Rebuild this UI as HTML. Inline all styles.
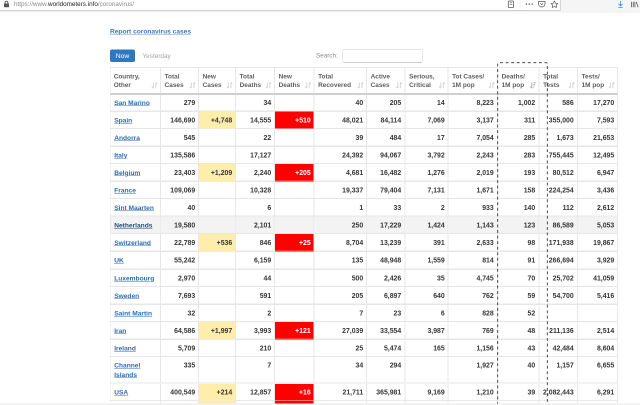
<!DOCTYPE html>
<html><head><meta charset="utf-8"><title>Coronavirus</title>
<style>
html,body{margin:0;padding:0;background:#fff;}
body{width:640px;height:405px;overflow:hidden;position:relative;font-family:"Liberation Sans",Arial,sans-serif;}
#s{position:absolute;left:0;top:0;width:1280px;height:810px;transform:scale(0.5);will-change:transform;transform-origin:0 0;}
.abs{position:absolute;}
.bar{left:0;top:0;width:1280px;height:25px;background:#f5f5f6;}
.barsh{left:0;top:25px;width:1280px;height:1px;background:#fafafa}
.urlf{left:0;top:0;width:1120px;height:20px;background:#fff;border-right:2px solid #d6d6d8;border-bottom:2px solid #d0d0d2;}
.url{left:28px;top:-0.4px;font-size:12.64px;line-height:16px;color:#8a8a8a;white-space:nowrap;letter-spacing:0}
.url b{font-weight:normal;color:#1a1a1a}
.report{left:220px;top:54px;font-size:13.2px;line-height:18px;font-weight:bold;color:#3a7abf;text-decoration:underline;text-decoration-thickness:1px;text-decoration-color:rgba(58,122,191,.75);white-space:nowrap}
.now{left:220px;top:99px;width:50px;height:25px;background:#2f78bd;border-radius:4px;color:#fff;font-size:13.6px;line-height:25px;text-align:center}
.yest{left:285px;top:99px;font-size:12.8px;line-height:25px;color:#a3a3a3}
.search{left:632px;top:99px;font-size:12.6px;line-height:25px;color:#8a8a8a}
.inp{left:685px;top:98px;width:161px;height:27px;border:1.2px solid #ccc;border-radius:4px;box-sizing:border-box;background:#fff}
.cell{position:absolute;box-sizing:border-box;border-right:2px solid #e7e7e7;border-bottom:2px solid #e7e7e7;font-size:13.8px;font-weight:bold;color:#363636;text-align:right;padding:0 5.6px 0 0;white-space:nowrap}
.cell.c0{border-left:2px solid #e7e7e7;text-align:left;padding:0 0 0 7.4px;color:#2f6cb0;text-decoration:underline;font-size:13.24px}
.hd{position:absolute;box-sizing:border-box;border-right:2px solid #e7e7e7;border-top:2px solid #e7e7e7;border-bottom:4px solid #cfcfcf;font-size:12.9px;line-height:17.8px;color:#5e5e5e;text-align:left;padding:7.5px 0 0 8.2px;white-space:nowrap;font-weight:bold;letter-spacing:0}
.hd.c0{border-left:2px solid #e7e7e7;padding-left:6.4px}
.y{background:#ffeeaa;border-bottom-color:#f5edcb!important}
.r{background:#ff0000;color:#fff;border-bottom-color:#f57575!important}
.g{background:#f3f3f3}
.cell.c0.hov{color:#23527c}
.sort{position:absolute;right:5.4px;bottom:9.5px;width:12px;height:13px}
</style></head><body><div id="s">
<div class="abs bar"></div>
<div class="abs urlf"></div><div class="abs barsh"></div>
<svg class="abs" style="left:6.8px;top:0.8px;width:12px;height:14px" viewBox="0 0 12 14"><rect x="1" y="6" width="10" height="7.5" rx="1" fill="#555"/><path d="M3.2 6V4.2a2.8 2.8 0 0 1 5.6 0V6" fill="none" stroke="#555" stroke-width="1.8"/></svg>
<div class="abs url">https://www.<b>worldometers.info</b>/coronavirus/</div>

<svg class="abs" style="left:1010px;top:0px;width:270px;height:20px" viewBox="0 0 135 10">
<rect x="3.300" y="1" width="5.300" height="6.500" rx="0.900" fill="none" stroke="#5a5a5a" stroke-width="0.750"/>
<path d="M4.700 2.800h2.500M4.700 4.300h2.500" stroke="#5a5a5a" stroke-width="0.550"/>
<path d="M15 1v7.500" stroke="#e8e8e8" stroke-width="0.600"/>
<circle cx="21.400" cy="4.100" r="0.720" fill="#555"/><circle cx="24.300" cy="4.100" r="0.720" fill="#555"/><circle cx="27.200" cy="4.100" r="0.720" fill="#555"/>
<path d="M33.500 1.400h6.500v2.400a3.250 3.250 0 0 1-6.500 0z" fill="none" stroke="#5a5a5a" stroke-width="0.750" stroke-linejoin="round"/>
<path d="M35.300 3.300l1.450 1.350l1.450-1.350" fill="none" stroke="#5a5a5a" stroke-width="0.650"/>
<path d="M49.400 1l1.050 2.200l2.400.300l-1.750 1.650l.45 2.400l-2.150-1.150l-2.150 1.150l.45-2.400l-1.750-1.650l2.400-.300z" fill="none" stroke="#5a5a5a" stroke-width="0.700" stroke-linejoin="round"/>
<path d="M115.500 1v4.800M113.500 3.900l2 2l2-2M113.200 7.500h4.600" fill="none" stroke="#3b8ff5" stroke-width="0.850"/>
<path d="M126.600 1.700v5.600M128.250 1.700v5.600M129.900 1.700v5.600M131.300 2l1.800 5.300" fill="none" stroke="#555" stroke-width="0.800"/>
</svg>

<div class="abs report">Report coronavirus cases</div>
<div class="abs now">Now</div><div class="abs yest">Yesterday</div><div class="abs search">Search:</div><div class="abs inp"></div>
<div class="hd c0" style="left:219px;top:134px;width:103px;height:56px">Country,<br>Other<svg class="sort" viewBox="0 0 6 6" preserveAspectRatio="none"><path d="M1.800 0.300V5.600M0.200 4.200L1.800 5.700M4.300 5.700V0.400M4.300 0.300L5.800 1.800" fill="none" stroke="#d2d2d2" stroke-width="0.900"/></svg></div>
<div class="hd" style="left:321px;top:134px;width:77px;height:56px">Total<br>Cases<svg class="sort" viewBox="0 0 6 6" preserveAspectRatio="none"><path d="M1.800 0.300V5.600M0.200 4.200L1.800 5.700M4.300 5.700V0.400M4.300 0.300L5.800 1.800" fill="none" stroke="#d2d2d2" stroke-width="0.900"/></svg></div>
<div class="hd" style="left:397px;top:134px;width:75px;height:56px">New<br>Cases<svg class="sort" viewBox="0 0 6 6" preserveAspectRatio="none"><path d="M1.800 0.300V5.600M0.200 4.200L1.800 5.700M4.300 5.700V0.400M4.300 0.300L5.800 1.800" fill="none" stroke="#d2d2d2" stroke-width="0.900"/></svg></div>
<div class="hd" style="left:471px;top:134px;width:79px;height:56px">Total<br>Deaths<svg class="sort" viewBox="0 0 6 6" preserveAspectRatio="none"><path d="M1.800 0.300V5.600M0.200 4.200L1.800 5.700M4.300 5.700V0.400M4.300 0.300L5.800 1.800" fill="none" stroke="#d2d2d2" stroke-width="0.900"/></svg></div>
<div class="hd" style="left:549px;top:134px;width:80px;height:56px">New<br>Deaths<svg class="sort" viewBox="0 0 6 6" preserveAspectRatio="none"><path d="M1.800 0.300V5.600M0.200 4.200L1.800 5.700M4.300 5.700V0.400M4.300 0.300L5.800 1.800" fill="none" stroke="#d2d2d2" stroke-width="0.900"/></svg></div>
<div class="hd" style="left:628px;top:134px;width:106px;height:56px">Total<br>Recovered<svg class="sort" viewBox="0 0 6 6" preserveAspectRatio="none"><path d="M1.800 0.300V5.600M0.200 4.200L1.800 5.700M4.300 5.700V0.400M4.300 0.300L5.800 1.800" fill="none" stroke="#d2d2d2" stroke-width="0.900"/></svg></div>
<div class="hd" style="left:733px;top:134px;width:78px;height:56px">Active<br>Cases<svg class="sort" viewBox="0 0 6 6" preserveAspectRatio="none"><path d="M1.800 0.300V5.600M0.200 4.200L1.800 5.700M4.300 5.700V0.400M4.300 0.300L5.800 1.800" fill="none" stroke="#d2d2d2" stroke-width="0.900"/></svg></div>
<div class="hd" style="left:810px;top:134px;width:87px;height:56px">Serious,<br>Critical<svg class="sort" viewBox="0 0 6 6" preserveAspectRatio="none"><path d="M1.800 0.300V5.600M0.200 4.200L1.800 5.700M4.300 5.700V0.400M4.300 0.300L5.800 1.800" fill="none" stroke="#d2d2d2" stroke-width="0.900"/></svg></div>
<div class="hd" style="left:896px;top:134px;width:100px;height:56px">Tot Cases/<br>1M pop<svg class="sort" viewBox="0 0 6 6" preserveAspectRatio="none"><path d="M1.800 0.300V5.600M0.200 4.200L1.800 5.700M4.300 5.700V0.400M4.300 0.300L5.800 1.800" fill="none" stroke="#d2d2d2" stroke-width="0.900"/></svg></div>
<div class="hd" style="left:995px;top:134px;width:84px;height:56px">Deaths/<br>1M pop<svg class="sort" viewBox="0 0 6 6" preserveAspectRatio="none"><path d="M1.800 0.300V5.600M0.200 4.200L1.800 5.700" fill="none" stroke="#a8a8a8" stroke-width="0.900"/><path d="M3.300 0.700H5.900M3.300 2.200H5.200M3.300 3.700H4.600M3.300 5.200H4" fill="none" stroke="#a8a8a8" stroke-width="0.800"/></svg></div>
<div class="hd" style="left:1078px;top:134px;width:78px;height:56px">Total<br>Tests<svg class="sort" viewBox="0 0 6 6" preserveAspectRatio="none"><path d="M1.800 0.300V5.600M0.200 4.200L1.800 5.700M4.300 5.700V0.400M4.300 0.300L5.800 1.800" fill="none" stroke="#d2d2d2" stroke-width="0.900"/></svg></div>
<div class="hd" style="left:1155px;top:134px;width:81px;height:56px">Tests/<br>1M pop<svg class="sort" viewBox="0 0 6 6" preserveAspectRatio="none"><path d="M1.800 0.300V5.600M0.200 4.200L1.800 5.700M4.300 5.700V0.400M4.300 0.300L5.800 1.800" fill="none" stroke="#d2d2d2" stroke-width="0.900"/></svg></div>
<div class="cell c0" style="left:219px;top:189.6px;width:103px;height:33.2px;line-height:31px;">San Marino</div>
<div class="cell" style="left:321px;top:189.6px;width:77px;height:33.2px;line-height:31px;">279</div>
<div class="cell" style="left:397px;top:189.6px;width:75px;height:33.2px;line-height:31px;"></div>
<div class="cell" style="left:471px;top:189.6px;width:79px;height:33.2px;line-height:31px;">34</div>
<div class="cell" style="left:549px;top:189.6px;width:80px;height:33.2px;line-height:31px;"></div>
<div class="cell" style="left:628px;top:189.6px;width:106px;height:33.2px;line-height:31px;">40</div>
<div class="cell" style="left:733px;top:189.6px;width:78px;height:33.2px;line-height:31px;padding-right:6.6px;">205</div>
<div class="cell" style="left:810px;top:189.6px;width:87px;height:33.2px;line-height:31px;">14</div>
<div class="cell" style="left:896px;top:189.6px;width:100px;height:33.2px;line-height:31px;padding-right:6.6px;">8,223</div>
<div class="cell" style="left:995px;top:189.6px;width:84px;height:33.2px;line-height:31px;padding-right:6.6px;">1,002</div>
<div class="cell" style="left:1078px;top:189.6px;width:78px;height:33.2px;line-height:31px;padding-right:6.6px;">586</div>
<div class="cell" style="left:1155px;top:189.6px;width:81px;height:33.2px;line-height:31px;">17,270</div>
<div class="cell c0" style="left:219px;top:222.8px;width:103px;height:35px;line-height:35px;">Spain</div>
<div class="cell" style="left:321px;top:222.8px;width:77px;height:35px;line-height:35px;">146,690</div>
<div class="cell y" style="left:398px;top:222.8px;width:74px;height:35px;line-height:35px;">+4,748</div>
<div class="cell" style="left:471px;top:222.8px;width:79px;height:35px;line-height:35px;">14,555</div>
<div class="cell r" style="left:550px;top:222.8px;width:79px;height:35px;line-height:35px;">+510</div>
<div class="cell" style="left:628px;top:222.8px;width:106px;height:35px;line-height:35px;">48,021</div>
<div class="cell" style="left:733px;top:222.8px;width:78px;height:35px;line-height:35px;padding-right:6.6px;">84,114</div>
<div class="cell" style="left:810px;top:222.8px;width:87px;height:35px;line-height:35px;">7,069</div>
<div class="cell" style="left:896px;top:222.8px;width:100px;height:35px;line-height:35px;padding-right:6.6px;">3,137</div>
<div class="cell" style="left:995px;top:222.8px;width:84px;height:35px;line-height:35px;padding-right:6.6px;">311</div>
<div class="cell" style="left:1078px;top:222.8px;width:78px;height:35px;line-height:35px;padding-right:6.6px;">355,000</div>
<div class="cell" style="left:1155px;top:222.8px;width:81px;height:35px;line-height:35px;">7,593</div>
<div class="cell c0" style="left:219px;top:257.8px;width:103px;height:35px;line-height:35px;">Andorra</div>
<div class="cell" style="left:321px;top:257.8px;width:77px;height:35px;line-height:35px;">545</div>
<div class="cell" style="left:397px;top:257.8px;width:75px;height:35px;line-height:35px;"></div>
<div class="cell" style="left:471px;top:257.8px;width:79px;height:35px;line-height:35px;">22</div>
<div class="cell" style="left:549px;top:257.8px;width:80px;height:35px;line-height:35px;"></div>
<div class="cell" style="left:628px;top:257.8px;width:106px;height:35px;line-height:35px;">39</div>
<div class="cell" style="left:733px;top:257.8px;width:78px;height:35px;line-height:35px;padding-right:6.6px;">484</div>
<div class="cell" style="left:810px;top:257.8px;width:87px;height:35px;line-height:35px;">17</div>
<div class="cell" style="left:896px;top:257.8px;width:100px;height:35px;line-height:35px;padding-right:6.6px;">7,054</div>
<div class="cell" style="left:995px;top:257.8px;width:84px;height:35px;line-height:35px;padding-right:6.6px;">285</div>
<div class="cell" style="left:1078px;top:257.8px;width:78px;height:35px;line-height:35px;padding-right:6.6px;">1,673</div>
<div class="cell" style="left:1155px;top:257.8px;width:81px;height:35px;line-height:35px;">21,653</div>
<div class="cell c0" style="left:219px;top:292.8px;width:103px;height:35px;line-height:35px;">Italy</div>
<div class="cell" style="left:321px;top:292.8px;width:77px;height:35px;line-height:35px;">135,586</div>
<div class="cell" style="left:397px;top:292.8px;width:75px;height:35px;line-height:35px;"></div>
<div class="cell" style="left:471px;top:292.8px;width:79px;height:35px;line-height:35px;">17,127</div>
<div class="cell" style="left:549px;top:292.8px;width:80px;height:35px;line-height:35px;"></div>
<div class="cell" style="left:628px;top:292.8px;width:106px;height:35px;line-height:35px;">24,392</div>
<div class="cell" style="left:733px;top:292.8px;width:78px;height:35px;line-height:35px;padding-right:6.6px;">94,067</div>
<div class="cell" style="left:810px;top:292.8px;width:87px;height:35px;line-height:35px;">3,792</div>
<div class="cell" style="left:896px;top:292.8px;width:100px;height:35px;line-height:35px;padding-right:6.6px;">2,243</div>
<div class="cell" style="left:995px;top:292.8px;width:84px;height:35px;line-height:35px;padding-right:6.6px;">283</div>
<div class="cell" style="left:1078px;top:292.8px;width:78px;height:35px;line-height:35px;padding-right:6.6px;">755,445</div>
<div class="cell" style="left:1155px;top:292.8px;width:81px;height:35px;line-height:35px;">12,495</div>
<div class="cell c0" style="left:219px;top:327.8px;width:103px;height:35px;line-height:35px;">Belgium</div>
<div class="cell" style="left:321px;top:327.8px;width:77px;height:35px;line-height:35px;">23,403</div>
<div class="cell y" style="left:398px;top:327.8px;width:74px;height:35px;line-height:35px;">+1,209</div>
<div class="cell" style="left:471px;top:327.8px;width:79px;height:35px;line-height:35px;">2,240</div>
<div class="cell r" style="left:550px;top:327.8px;width:79px;height:35px;line-height:35px;">+205</div>
<div class="cell" style="left:628px;top:327.8px;width:106px;height:35px;line-height:35px;">4,681</div>
<div class="cell" style="left:733px;top:327.8px;width:78px;height:35px;line-height:35px;padding-right:6.6px;">16,482</div>
<div class="cell" style="left:810px;top:327.8px;width:87px;height:35px;line-height:35px;">1,276</div>
<div class="cell" style="left:896px;top:327.8px;width:100px;height:35px;line-height:35px;padding-right:6.6px;">2,019</div>
<div class="cell" style="left:995px;top:327.8px;width:84px;height:35px;line-height:35px;padding-right:6.6px;">193</div>
<div class="cell" style="left:1078px;top:327.8px;width:78px;height:35px;line-height:35px;padding-right:6.6px;">80,512</div>
<div class="cell" style="left:1155px;top:327.8px;width:81px;height:35px;line-height:35px;">6,947</div>
<div class="cell c0" style="left:219px;top:362.8px;width:103px;height:35px;line-height:35px;">France</div>
<div class="cell" style="left:321px;top:362.8px;width:77px;height:35px;line-height:35px;">109,069</div>
<div class="cell" style="left:397px;top:362.8px;width:75px;height:35px;line-height:35px;"></div>
<div class="cell" style="left:471px;top:362.8px;width:79px;height:35px;line-height:35px;">10,328</div>
<div class="cell" style="left:549px;top:362.8px;width:80px;height:35px;line-height:35px;"></div>
<div class="cell" style="left:628px;top:362.8px;width:106px;height:35px;line-height:35px;">19,337</div>
<div class="cell" style="left:733px;top:362.8px;width:78px;height:35px;line-height:35px;padding-right:6.6px;">79,404</div>
<div class="cell" style="left:810px;top:362.8px;width:87px;height:35px;line-height:35px;">7,131</div>
<div class="cell" style="left:896px;top:362.8px;width:100px;height:35px;line-height:35px;padding-right:6.6px;">1,671</div>
<div class="cell" style="left:995px;top:362.8px;width:84px;height:35px;line-height:35px;padding-right:6.6px;">158</div>
<div class="cell" style="left:1078px;top:362.8px;width:78px;height:35px;line-height:35px;padding-right:6.6px;">224,254</div>
<div class="cell" style="left:1155px;top:362.8px;width:81px;height:35px;line-height:35px;">3,436</div>
<div class="cell c0" style="left:219px;top:397.8px;width:103px;height:35px;line-height:35px;">Sint Maarten</div>
<div class="cell" style="left:321px;top:397.8px;width:77px;height:35px;line-height:35px;">40</div>
<div class="cell" style="left:397px;top:397.8px;width:75px;height:35px;line-height:35px;"></div>
<div class="cell" style="left:471px;top:397.8px;width:79px;height:35px;line-height:35px;">6</div>
<div class="cell" style="left:549px;top:397.8px;width:80px;height:35px;line-height:35px;"></div>
<div class="cell" style="left:628px;top:397.8px;width:106px;height:35px;line-height:35px;">1</div>
<div class="cell" style="left:733px;top:397.8px;width:78px;height:35px;line-height:35px;padding-right:6.6px;">33</div>
<div class="cell" style="left:810px;top:397.8px;width:87px;height:35px;line-height:35px;">2</div>
<div class="cell" style="left:896px;top:397.8px;width:100px;height:35px;line-height:35px;padding-right:6.6px;">933</div>
<div class="cell" style="left:995px;top:397.8px;width:84px;height:35px;line-height:35px;padding-right:6.6px;">140</div>
<div class="cell" style="left:1078px;top:397.8px;width:78px;height:35px;line-height:35px;padding-right:6.6px;">112</div>
<div class="cell" style="left:1155px;top:397.8px;width:81px;height:35px;line-height:35px;">2,612</div>
<div class="cell c0 g hov" style="left:219px;top:432.8px;width:103px;height:35px;line-height:35px;">Netherlands</div>
<div class="cell g" style="left:321px;top:432.8px;width:77px;height:35px;line-height:35px;">19,580</div>
<div class="cell g" style="left:397px;top:432.8px;width:75px;height:35px;line-height:35px;"></div>
<div class="cell g" style="left:471px;top:432.8px;width:79px;height:35px;line-height:35px;">2,101</div>
<div class="cell g" style="left:549px;top:432.8px;width:80px;height:35px;line-height:35px;"></div>
<div class="cell g" style="left:628px;top:432.8px;width:106px;height:35px;line-height:35px;">250</div>
<div class="cell g" style="left:733px;top:432.8px;width:78px;height:35px;line-height:35px;padding-right:6.6px;">17,229</div>
<div class="cell g" style="left:810px;top:432.8px;width:87px;height:35px;line-height:35px;">1,424</div>
<div class="cell g" style="left:896px;top:432.8px;width:100px;height:35px;line-height:35px;padding-right:6.6px;">1,143</div>
<div class="cell g" style="left:995px;top:432.8px;width:84px;height:35px;line-height:35px;padding-right:6.6px;">123</div>
<div class="cell g" style="left:1078px;top:432.8px;width:78px;height:35px;line-height:35px;padding-right:6.6px;">86,589</div>
<div class="cell g" style="left:1155px;top:432.8px;width:81px;height:35px;line-height:35px;">5,053</div>
<div class="cell c0" style="left:219px;top:467.8px;width:103px;height:35px;line-height:35px;">Switzerland</div>
<div class="cell" style="left:321px;top:467.8px;width:77px;height:35px;line-height:35px;">22,789</div>
<div class="cell y" style="left:398px;top:467.8px;width:74px;height:35px;line-height:35px;">+536</div>
<div class="cell" style="left:471px;top:467.8px;width:79px;height:35px;line-height:35px;">846</div>
<div class="cell r" style="left:550px;top:467.8px;width:79px;height:35px;line-height:35px;">+25</div>
<div class="cell" style="left:628px;top:467.8px;width:106px;height:35px;line-height:35px;">8,704</div>
<div class="cell" style="left:733px;top:467.8px;width:78px;height:35px;line-height:35px;padding-right:6.6px;">13,239</div>
<div class="cell" style="left:810px;top:467.8px;width:87px;height:35px;line-height:35px;">391</div>
<div class="cell" style="left:896px;top:467.8px;width:100px;height:35px;line-height:35px;padding-right:6.6px;">2,633</div>
<div class="cell" style="left:995px;top:467.8px;width:84px;height:35px;line-height:35px;padding-right:6.6px;">98</div>
<div class="cell" style="left:1078px;top:467.8px;width:78px;height:35px;line-height:35px;padding-right:6.6px;">171,938</div>
<div class="cell" style="left:1155px;top:467.8px;width:81px;height:35px;line-height:35px;">19,867</div>
<div class="cell c0" style="left:219px;top:502.8px;width:103px;height:36px;line-height:35px;">UK</div>
<div class="cell" style="left:321px;top:502.8px;width:77px;height:36px;line-height:35px;">55,242</div>
<div class="cell" style="left:397px;top:502.8px;width:75px;height:36px;line-height:35px;"></div>
<div class="cell" style="left:471px;top:502.8px;width:79px;height:36px;line-height:35px;">6,159</div>
<div class="cell" style="left:549px;top:502.8px;width:80px;height:36px;line-height:35px;"></div>
<div class="cell" style="left:628px;top:502.8px;width:106px;height:36px;line-height:35px;">135</div>
<div class="cell" style="left:733px;top:502.8px;width:78px;height:36px;line-height:35px;padding-right:6.6px;">48,948</div>
<div class="cell" style="left:810px;top:502.8px;width:87px;height:36px;line-height:35px;">1,559</div>
<div class="cell" style="left:896px;top:502.8px;width:100px;height:36px;line-height:35px;padding-right:6.6px;">814</div>
<div class="cell" style="left:995px;top:502.8px;width:84px;height:36px;line-height:35px;padding-right:6.6px;">91</div>
<div class="cell" style="left:1078px;top:502.8px;width:78px;height:36px;line-height:35px;padding-right:6.6px;">266,694</div>
<div class="cell" style="left:1155px;top:502.8px;width:81px;height:36px;line-height:35px;">3,929</div>
<div class="cell c0" style="left:219px;top:538.8px;width:103px;height:35px;line-height:35px;">Luxembourg</div>
<div class="cell" style="left:321px;top:538.8px;width:77px;height:35px;line-height:35px;">2,970</div>
<div class="cell" style="left:397px;top:538.8px;width:75px;height:35px;line-height:35px;"></div>
<div class="cell" style="left:471px;top:538.8px;width:79px;height:35px;line-height:35px;">44</div>
<div class="cell" style="left:549px;top:538.8px;width:80px;height:35px;line-height:35px;"></div>
<div class="cell" style="left:628px;top:538.8px;width:106px;height:35px;line-height:35px;">500</div>
<div class="cell" style="left:733px;top:538.8px;width:78px;height:35px;line-height:35px;padding-right:6.6px;">2,426</div>
<div class="cell" style="left:810px;top:538.8px;width:87px;height:35px;line-height:35px;">35</div>
<div class="cell" style="left:896px;top:538.8px;width:100px;height:35px;line-height:35px;padding-right:6.6px;">4,745</div>
<div class="cell" style="left:995px;top:538.8px;width:84px;height:35px;line-height:35px;padding-right:6.6px;">70</div>
<div class="cell" style="left:1078px;top:538.8px;width:78px;height:35px;line-height:35px;padding-right:6.6px;">25,702</div>
<div class="cell" style="left:1155px;top:538.8px;width:81px;height:35px;line-height:35px;">41,059</div>
<div class="cell c0" style="left:219px;top:573.8px;width:103px;height:35px;line-height:35px;">Sweden</div>
<div class="cell" style="left:321px;top:573.8px;width:77px;height:35px;line-height:35px;">7,693</div>
<div class="cell" style="left:397px;top:573.8px;width:75px;height:35px;line-height:35px;"></div>
<div class="cell" style="left:471px;top:573.8px;width:79px;height:35px;line-height:35px;">591</div>
<div class="cell" style="left:549px;top:573.8px;width:80px;height:35px;line-height:35px;"></div>
<div class="cell" style="left:628px;top:573.8px;width:106px;height:35px;line-height:35px;">205</div>
<div class="cell" style="left:733px;top:573.8px;width:78px;height:35px;line-height:35px;padding-right:6.6px;">6,897</div>
<div class="cell" style="left:810px;top:573.8px;width:87px;height:35px;line-height:35px;">640</div>
<div class="cell" style="left:896px;top:573.8px;width:100px;height:35px;line-height:35px;padding-right:6.6px;">762</div>
<div class="cell" style="left:995px;top:573.8px;width:84px;height:35px;line-height:35px;padding-right:6.6px;">59</div>
<div class="cell" style="left:1078px;top:573.8px;width:78px;height:35px;line-height:35px;padding-right:6.6px;">54,700</div>
<div class="cell" style="left:1155px;top:573.8px;width:81px;height:35px;line-height:35px;">5,416</div>
<div class="cell c0" style="left:219px;top:608.8px;width:103px;height:35px;line-height:35px;">Saint Martin</div>
<div class="cell" style="left:321px;top:608.8px;width:77px;height:35px;line-height:35px;">32</div>
<div class="cell" style="left:397px;top:608.8px;width:75px;height:35px;line-height:35px;"></div>
<div class="cell" style="left:471px;top:608.8px;width:79px;height:35px;line-height:35px;">2</div>
<div class="cell" style="left:549px;top:608.8px;width:80px;height:35px;line-height:35px;"></div>
<div class="cell" style="left:628px;top:608.8px;width:106px;height:35px;line-height:35px;">7</div>
<div class="cell" style="left:733px;top:608.8px;width:78px;height:35px;line-height:35px;padding-right:6.6px;">23</div>
<div class="cell" style="left:810px;top:608.8px;width:87px;height:35px;line-height:35px;">6</div>
<div class="cell" style="left:896px;top:608.8px;width:100px;height:35px;line-height:35px;padding-right:6.6px;">828</div>
<div class="cell" style="left:995px;top:608.8px;width:84px;height:35px;line-height:35px;padding-right:6.6px;">52</div>
<div class="cell" style="left:1078px;top:608.8px;width:78px;height:35px;line-height:35px;padding-right:6.6px;"></div>
<div class="cell" style="left:1155px;top:608.8px;width:81px;height:35px;line-height:35px;"></div>
<div class="cell c0" style="left:219px;top:643.8px;width:103px;height:35px;line-height:35px;">Iran</div>
<div class="cell" style="left:321px;top:643.8px;width:77px;height:35px;line-height:35px;">64,586</div>
<div class="cell y" style="left:398px;top:643.8px;width:74px;height:35px;line-height:35px;">+1,997</div>
<div class="cell" style="left:471px;top:643.8px;width:79px;height:35px;line-height:35px;">3,993</div>
<div class="cell r" style="left:550px;top:643.8px;width:79px;height:35px;line-height:35px;">+121</div>
<div class="cell" style="left:628px;top:643.8px;width:106px;height:35px;line-height:35px;">27,039</div>
<div class="cell" style="left:733px;top:643.8px;width:78px;height:35px;line-height:35px;padding-right:6.6px;">33,554</div>
<div class="cell" style="left:810px;top:643.8px;width:87px;height:35px;line-height:35px;">3,987</div>
<div class="cell" style="left:896px;top:643.8px;width:100px;height:35px;line-height:35px;padding-right:6.6px;">769</div>
<div class="cell" style="left:995px;top:643.8px;width:84px;height:35px;line-height:35px;padding-right:6.6px;">48</div>
<div class="cell" style="left:1078px;top:643.8px;width:78px;height:35px;line-height:35px;padding-right:6.6px;">211,136</div>
<div class="cell" style="left:1155px;top:643.8px;width:81px;height:35px;line-height:35px;">2,514</div>
<div class="cell c0" style="left:219px;top:678.8px;width:103px;height:35px;line-height:35px;">Ireland</div>
<div class="cell" style="left:321px;top:678.8px;width:77px;height:35px;line-height:35px;">5,709</div>
<div class="cell" style="left:397px;top:678.8px;width:75px;height:35px;line-height:35px;"></div>
<div class="cell" style="left:471px;top:678.8px;width:79px;height:35px;line-height:35px;">210</div>
<div class="cell" style="left:549px;top:678.8px;width:80px;height:35px;line-height:35px;"></div>
<div class="cell" style="left:628px;top:678.8px;width:106px;height:35px;line-height:35px;">25</div>
<div class="cell" style="left:733px;top:678.8px;width:78px;height:35px;line-height:35px;padding-right:6.6px;">5,474</div>
<div class="cell" style="left:810px;top:678.8px;width:87px;height:35px;line-height:35px;">165</div>
<div class="cell" style="left:896px;top:678.8px;width:100px;height:35px;line-height:35px;padding-right:6.6px;">1,156</div>
<div class="cell" style="left:995px;top:678.8px;width:84px;height:35px;line-height:35px;padding-right:6.6px;">43</div>
<div class="cell" style="left:1078px;top:678.8px;width:78px;height:35px;line-height:35px;padding-right:6.6px;">42,484</div>
<div class="cell" style="left:1155px;top:678.8px;width:81px;height:35px;line-height:35px;">8,604</div>
<div class="cell c0" style="left:219px;top:713.8px;width:103px;height:53.6px;line-height:19px;padding-top:7px;">Channel<br>Islands</div>
<div class="cell" style="left:321px;top:713.8px;width:77px;height:53.6px;line-height:19px;padding-top:7px;">335</div>
<div class="cell" style="left:397px;top:713.8px;width:75px;height:53.6px;line-height:19px;padding-top:7px;"></div>
<div class="cell" style="left:471px;top:713.8px;width:79px;height:53.6px;line-height:19px;padding-top:7px;">7</div>
<div class="cell" style="left:549px;top:713.8px;width:80px;height:53.6px;line-height:19px;padding-top:7px;"></div>
<div class="cell" style="left:628px;top:713.8px;width:106px;height:53.6px;line-height:19px;padding-top:7px;">34</div>
<div class="cell" style="left:733px;top:713.8px;width:78px;height:53.6px;line-height:19px;padding-top:7px;padding-right:6.6px;">294</div>
<div class="cell" style="left:810px;top:713.8px;width:87px;height:53.6px;line-height:19px;padding-top:7px;"></div>
<div class="cell" style="left:896px;top:713.8px;width:100px;height:53.6px;line-height:19px;padding-top:7px;padding-right:6.6px;">1,927</div>
<div class="cell" style="left:995px;top:713.8px;width:84px;height:53.6px;line-height:19px;padding-top:7px;padding-right:6.6px;">40</div>
<div class="cell" style="left:1078px;top:713.8px;width:78px;height:53.6px;line-height:19px;padding-top:7px;padding-right:6.6px;">1,157</div>
<div class="cell" style="left:1155px;top:713.8px;width:81px;height:53.6px;line-height:19px;padding-top:7px;">6,655</div>
<div class="cell c0" style="left:219px;top:767.4px;width:103px;height:34.6px;line-height:35px;">USA</div>
<div class="cell" style="left:321px;top:767.4px;width:77px;height:34.6px;line-height:35px;">400,549</div>
<div class="cell y" style="left:398px;top:767.4px;width:74px;height:34.6px;line-height:35px;">+214</div>
<div class="cell" style="left:471px;top:767.4px;width:79px;height:34.6px;line-height:35px;">12,857</div>
<div class="cell r" style="left:550px;top:767.4px;width:79px;height:34.6px;line-height:35px;">+16</div>
<div class="cell" style="left:628px;top:767.4px;width:106px;height:34.6px;line-height:35px;">21,711</div>
<div class="cell" style="left:733px;top:767.4px;width:78px;height:34.6px;line-height:35px;padding-right:6.6px;">365,981</div>
<div class="cell" style="left:810px;top:767.4px;width:87px;height:34.6px;line-height:35px;">9,169</div>
<div class="cell" style="left:896px;top:767.4px;width:100px;height:34.6px;line-height:35px;padding-right:6.6px;">1,210</div>
<div class="cell" style="left:995px;top:767.4px;width:84px;height:34.6px;line-height:35px;padding-right:6.6px;">39</div>
<div class="cell" style="left:1078px;top:767.4px;width:78px;height:34.6px;line-height:35px;padding-right:6.6px;">2,082,443</div>
<div class="cell" style="left:1155px;top:767.4px;width:81px;height:34.6px;line-height:35px;">6,291</div>
<div class="cell c0" style="left:219px;top:802px;width:103px;height:39px;line-height:35px;"></div>
<div class="cell" style="left:321px;top:802px;width:77px;height:39px;line-height:35px;"></div>
<div class="cell y" style="left:398px;top:802px;width:74px;height:39px;line-height:35px;">+1</div>
<div class="cell" style="left:471px;top:802px;width:79px;height:39px;line-height:35px;"></div>
<div class="cell r" style="left:550px;top:802px;width:79px;height:39px;line-height:35px;">+1</div>
<div class="cell" style="left:628px;top:802px;width:106px;height:39px;line-height:35px;"></div>
<div class="cell" style="left:733px;top:802px;width:78px;height:39px;line-height:35px;padding-right:6.6px;"></div>
<div class="cell" style="left:810px;top:802px;width:87px;height:39px;line-height:35px;"></div>
<div class="cell" style="left:896px;top:802px;width:100px;height:39px;line-height:35px;padding-right:6.6px;"></div>
<div class="cell" style="left:995px;top:802px;width:84px;height:39px;line-height:35px;padding-right:6.6px;"></div>
<div class="cell" style="left:1078px;top:802px;width:78px;height:39px;line-height:35px;padding-right:6.6px;"></div>
<div class="cell" style="left:1155px;top:802px;width:81px;height:39px;line-height:35px;"></div>
<svg class="abs" style="left:980px;top:110px;width:140px;height:700px" viewBox="0 0 70 350"><path d="M7.700 350V8.700a1 1 0 0 1 1-1H56.300a1 1 0 0 1 1 1V350" fill="none" stroke="#303030" stroke-width="0.850" stroke-dasharray="2.900 2.650" stroke-dashoffset="0"/></svg>
<div class="abs" style="left:0;top:807px;width:1280px;height:3px;background:#f0f0f0"></div>
</div></body></html>
